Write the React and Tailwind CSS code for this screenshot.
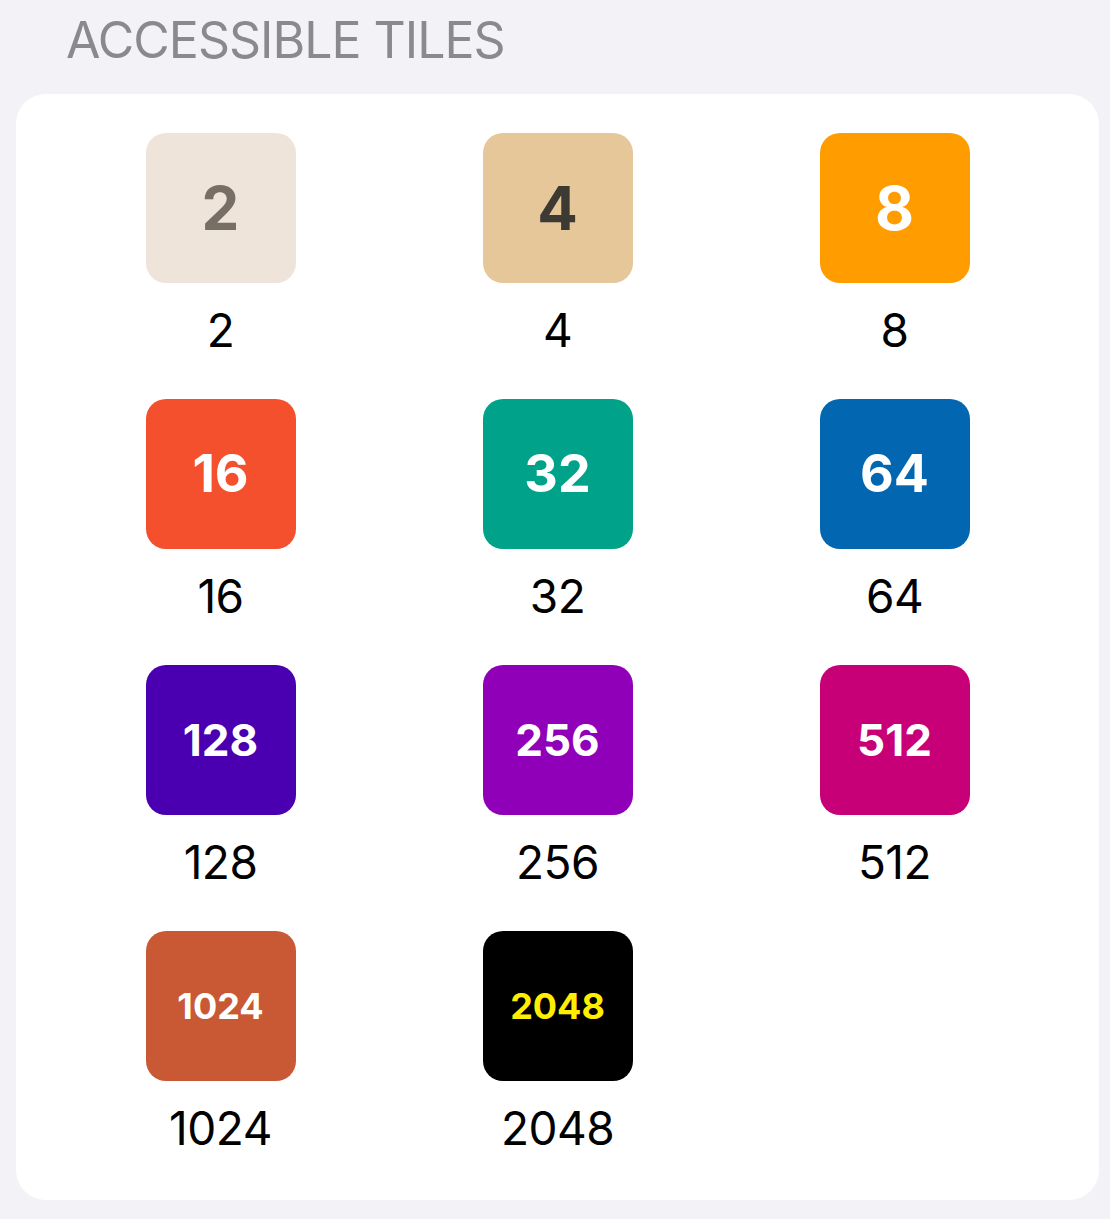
import React from 'react';

const tiles = [
  { value: 2, bg: 'bg-[#eee4da]', fg: 'text-[#776e65]', size: 'text-[60px]' },
  { value: 4, bg: 'bg-[#e5c79a]', fg: 'text-[#3d3a33]', size: 'text-[60px]' },
  { value: 8, bg: 'bg-[#ff9c00]', fg: 'text-white', size: 'text-[60px]' },
  { value: 16, bg: 'bg-[#f5502e]', fg: 'text-white', size: 'text-[52px]' },
  { value: 32, bg: 'bg-[#00a38a]', fg: 'text-white', size: 'text-[52px]' },
  { value: 64, bg: 'bg-[#0267b0]', fg: 'text-white', size: 'text-[52px]' },
  { value: 128, bg: 'bg-[#4a00b0]', fg: 'text-white', size: 'text-[44px]' },
  { value: 256, bg: 'bg-[#9000b8]', fg: 'text-white', size: 'text-[44px]' },
  { value: 512, bg: 'bg-[#c80078]', fg: 'text-white', size: 'text-[44px]' },
  { value: 1024, bg: 'bg-[#c85934]', fg: 'text-white', size: 'text-[36px]' },
  { value: 2048, bg: 'bg-black', fg: 'text-[#ffee00]', size: 'text-[36px]' },
];

function Tile({ tile }) {
  return (
    <div className="flex flex-col items-center">
      <div
        className={`flex h-[150px] w-[150px] items-center justify-center rounded-[20px] ${tile.bg}`}
      >
        <span className={`font-bold leading-none ${tile.fg} ${tile.size}`}>
          {tile.value}
        </span>
      </div>
      <div className="mt-[19px] text-[46px] leading-[56px] tracking-[-0.5px] text-black">
        {tile.value}
      </div>
    </div>
  );
}

export default function App() {
  return (
    <div
      className="min-h-[1219px] bg-[#f2f2f7] pl-4 pr-[11px] pt-[10px]"
      style={{ fontFamily: 'Inter, "Noto Sans", sans-serif' }}
    >
      <h2 className="pl-[50px] text-[50px] leading-[60px] font-normal uppercase tracking-[-1px] text-[#8a8a8e]">
        Accessible Tiles
      </h2>

      <div className="mt-6 rounded-[30px] bg-white px-9 pt-[39px] pb-[44px]">
        <div className="grid grid-cols-3 gap-y-[41px]">
          {tiles.map((tile) => (
            <Tile key={tile.value} tile={tile} />
          ))}
        </div>
      </div>
    </div>
  );
}
